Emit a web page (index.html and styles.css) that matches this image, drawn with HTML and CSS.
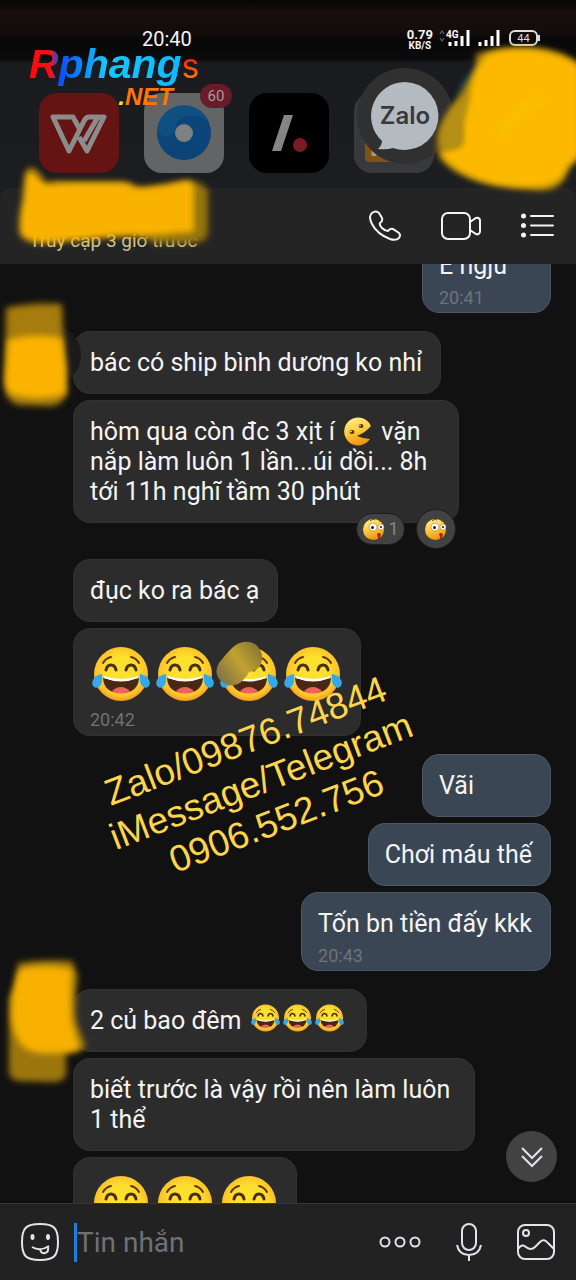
FILE: index.html
```html
<!DOCTYPE html>
<html lang="vi">
<head>
  <meta charset="UTF-8" />
  <meta name="viewport" content="width=device-width, initial-scale=1.0"/>
  <title>Chat</title>
  <link rel="stylesheet" href="styles.css">
</head>
<body>
  <!-- shared emoji -->
  <svg class="defs" aria-hidden="true">
    <defs>
      <radialGradient id="face" cx="50%" cy="45%" r="55%">
        <stop offset="0.5" stop-color="#fddf2e"/>
        <stop offset="0.85" stop-color="#fcc22b"/>
        <stop offset="1" stop-color="#f39a1d"/>
      </radialGradient>
      <linearGradient id="ball" x1="0.3" y1="0" x2="0.6" y2="1">
        <stop offset="0" stop-color="#fff08a"/>
        <stop offset="0.5" stop-color="#fdc93b"/>
        <stop offset="1" stop-color="#f08a0c"/>
      </linearGradient>
      <filter id="soft" x="-20%" y="-20%" width="140%" height="140%"><feGaussianBlur stdDeviation="3"/></filter>
      <symbol id="joy" viewBox="0 0 64 64">
        <circle cx="31" cy="30" r="27" fill="url(#face)"/>
        <path d="M13 19q3-5 8-6M41 13q5 1 8 6" fill="none" stroke="#5d3a12" stroke-width="2" stroke-linecap="round"/>
        <path d="M16 26q1-5 5-5t5 5M36 26q1-5 5-5t5 5" fill="none" stroke="#4b2d10" stroke-width="3" stroke-linecap="round"/>
        <path d="M13 34q18 5 36 0-1 15-18 15T13 34z" fill="#4a2714"/>
        <path d="M14 32q17 6 34 0v2q-17 7-34 0z" fill="#fff"/>
        <path d="M22 47q9-8 18 0-9 5-18 0z" fill="#f0625d"/>
        <path d="M12 30q1 8-2 12-3 3-6 1-3-3-1-7 2-5 9-6zM50 30q-1 8 2 12 3 3 6 1 3-3 1-7-2-5-9-6z" fill="#35a9e8"/>
      </symbol>
      <symbol id="pac" viewBox="0 0 30 30">
        <path d="M28 9A14 14 0 1 0 27 22q-6 0-13-3 8-3 14-10z" fill="url(#ball)"/>
        <ellipse cx="18" cy="9" rx="2.500" ry="2" fill="#5b3508"/>
        <ellipse cx="9" cy="15" rx="2.500" ry="2" fill="#5b3508"/>
        <circle cx="17" cy="8.500" r="0.800" fill="#fff"/>
        <circle cx="8" cy="14.500" r="0.800" fill="#fff"/>
      </symbol>
      <symbol id="wow" viewBox="0 0 24 24">
        <circle cx="11.500" cy="12.500" r="10.500" fill="url(#ball)"/>
        <path d="M8 4q3-3 5-1M17 4q2-1 4 1" fill="none" stroke="#7a4a0a" stroke-width="1"/>
        <circle cx="11" cy="10" r="4" fill="#fff" stroke="#b97a1a" stroke-width="0.600"/>
        <circle cx="19" cy="10" r="3" fill="#fff" stroke="#b97a1a" stroke-width="0.600"/>
        <circle cx="10.500" cy="10.500" r="1.500" fill="#321c06"/>
        <circle cx="19" cy="10" r="1.100" fill="#321c06"/>
        <path d="M15 17q2-2 4 0-1 2-1 5h-2q0-3-1-5z" fill="#a3280f"/>
      </symbol>
    </defs>
  </svg>

  <div class="shade">
    <div class="status-bar">
      <span class="clock">20:40</span>
      <div class="status-right">
        <span class="speed"><b>0.79</b><b class="unit">KB/S</b></span>
        <svg width="110" height="22" viewBox="0 0 110 22" aria-hidden="true">
          <path d="M2 8l2-3 2 3M2 12l2 3 2-3" fill="none" stroke="#666" stroke-width="1.200"/>
          <text x="8" y="12" class="net">4G</text>
          <path d="M12 20v-4M18 20v-5M24 20v-10M30 20V4M42 20v-4M48 20v-6M54 20V10M60 20V4" stroke="#fff" stroke-width="3"/>
          <rect x="72" y="5" width="27" height="14" rx="5" fill="none" stroke="#ddd" stroke-width="2"/>
          <path d="M101 9v6" stroke="#ddd" stroke-width="2"/>
          <text x="85.500" y="16" text-anchor="middle" class="batt">44</text>
        </svg>
      </div>
    </div>

    <div class="apps">
      <a class="app wps" href="#" aria-label="WPS">
        <svg width="80" height="80" viewBox="0 0 80 80">
          <path d="M45 48L59 24H50q-3 0-5 4L30 58 14 24h20l6 11M40 44l8 14 17-34h-8" fill="none" stroke="#8c8c8c" stroke-width="5" stroke-linejoin="round"/>
        </svg>
      </a>
      <a class="app web" href="#" aria-label="Browser">
        <svg width="80" height="80" viewBox="0 0 80 80">
          <circle cx="40" cy="40" r="27" fill="#0b4478"/>
          <path d="M13 39a27 27 0 0 1 52-10q-12-9-25-5-9 4-10 16-6 8-17-1z" fill="#0f4f82"/>
          <circle cx="40" cy="40" r="9" fill="#7e8082"/>
        </svg>
        <span class="count">60</span>
      </a>
      <a class="app slash" href="#" aria-label="Notes">
        <svg width="80" height="80" viewBox="0 0 80 80">
          <path d="M35 22h9L32 58h-9z" fill="#858585"/>
          <circle cx="51" cy="52" r="7" fill="#7b1a25"/>
        </svg>
      </a>
      <a class="app folder" href="#" aria-label="Folder">
        <svg width="80" height="80" viewBox="0 0 80 80">
          <rect x="11" y="40" width="30" height="29" rx="4" fill="#80530f"/>
          <path d="M20 55v8" stroke="#999" stroke-width="5"/>
        </svg>
      </a>
    </div>

    <div class="head-zalo">
      <svg width="96" height="96" viewBox="0 0 96 96" aria-hidden="true">
        <circle cx="48" cy="48" r="48" fill="#303031"/>
        <path d="M48 14a34 34 0 1 1-12 66q-6 2-15 1 4-4 4-8A34 34 0 0 1 48 14z" fill="#b3bac0"/>
      </svg>
      <span>Zalo</span>
    </div>

    <svg class="scribble scribble-head" width="150" height="160" viewBox="0 0 150 160" aria-hidden="true">
      <path d="M34 46q10-16 26-16L50 60 32 66z" fill="#17324d" filter="url(#soft)"/>
      <path d="M50 16q20-7 60-6 24 2 44 16v94q-12 8-16 22-8 12-28 10l-40-5Q34 142 14 120 6 100 22 76l28-46z" fill="#a8820c" filter="url(#soft)"/>
      <path d="M60 17q20-9 50-5 30 4 44 18v88q-12 6-16 18-10 14-32 13-36 2-64-12Q18 126 15 114q20-6 22-12-4-20 6-44 2-24 17-41z" fill="#fcb900" filter="url(#soft)"/>
      <path d="M16 108q-6-12 6-32 8-14 22-18-10 24-8 50-12 6-20 0z" fill="#b58f14" filter="url(#soft)"/>
      <path d="M72 98q20-26 44-38" fill="none" stroke="#fabf05" stroke-width="9" filter="url(#soft)"/>
    </svg>

    <div class="brand">
      <span class="brand-name">Rphang</span><span class="brand-s">s</span>
      <span class="brand-net"><i>.</i>NET</span>
    </div>
  </div>

  <header class="chat-head">
    <span class="seen">Truy cập 3 giờ trước</span>
    <svg class="scribble scribble-name" width="220" height="100" viewBox="0 0 220 100" aria-hidden="true">
      <path d="M26 8q6-6 14 4l6 8h78q10 2 16 6l44-6q18-2 24 8v44q-2 8-14 9l-40 0" fill="#93730e" filter="url(#soft)"/>
      <path d="M26 10q6-4 14 6l6 5h74q10 0 14 5 24 0 46-6 12-4 14 4v46q-40 4-80 5l-66 6q-22 1-28-9-2-14 3-36 1-18 3-26z" fill="#f9b204" filter="url(#soft)"/>
    </svg>
    <div class="actions">
      <button aria-label="Call">
        <svg width="34" height="34" viewBox="0 0 34 34"><path d="M4 4q4-3 7 0l3 5q1 3-2 5-1 2 2 5t6 3q2-3 5-2l6 4q2 2 0 5-3 3-9 1Q9 25 4 15 0 7 4 4z"/></svg>
      </button>
      <button aria-label="Video call">
        <svg width="40" height="30" viewBox="0 0 40 30"><rect x="1" y="2" width="28" height="26" rx="6"/><path d="M29 11l6-4q3-1 4 2v12q-1 3-4 2l-6-4"/></svg>
      </button>
      <button aria-label="Menu">
        <svg width="34" height="26" viewBox="0 0 34 26"><path d="M11 3h22M11 12.500h22M11 22h22" stroke-linecap="round"/><g fill="#f4f4f4" stroke="none"><circle cx="3.500" cy="3" r="2.500"/><circle cx="3.500" cy="12.500" r="2.500"/><circle cx="3.500" cy="22" r="2.500"/></g></svg>
      </button>
    </div>
  </header>

  <main class="messages">
    <section class="group sent first">
      <div class="bubble">E ngju<time>20:41</time></div>
    </section>

    <section class="group">
      <svg class="scribble scribble-ava" width="90" height="124" viewBox="0 0 90 124" aria-hidden="true">
        <circle cx="51" cy="61" r="30" fill="#1a1a1b"/>
        <path d="M6 14q25-6 56-4l2 48 3 40q-4 14-18 14l-30-1Q5 108 5 90z" fill="#a57c0c" filter="url(#soft)"/>
        <path d="M8 46q25-8 54-2l4 30-1 26q-28 8-54 0-6-4-6-16z" fill="#fbb300" filter="url(#soft)"/>
      </svg>
      <div class="bubble">bác có ship bình dương ko nhỉ</div>
      <div class="bubble reacted">hôm qua còn đc 3 xịt í <svg class="emo-pac" role="img" aria-label="pacman"><use href="#pac"/></svg> vặn nắp làm luôn 1 lần...úi dồi... 8h tới 11h nghĩ tầm 30 phút
        <div class="reactions">
          <button class="react-count"><svg width="24" height="24"><use href="#wow"/></svg>1</button>
          <button class="react-add" aria-label="React"><svg width="24" height="24"><use href="#wow"/></svg></button>
        </div>
      </div>
      <div class="bubble">đục ko ra bác ạ</div>
      <div class="bubble big">
        <div class="emojis"><svg><use href="#joy"/></svg><svg><use href="#joy"/></svg><svg><use href="#joy"/></svg><svg><use href="#joy"/></svg></div>
        <time>20:42</time>
        <svg class="smudge" width="50" height="50" viewBox="0 0 50 50" aria-hidden="true">
          <defs><linearGradient id="mud" x1="0" y1="1" x2="1" y2="0.3"><stop offset="0" stop-color="#6f6a4c"/><stop offset="0.6" stop-color="#c2a22f"/><stop offset="1" stop-color="#8e7a33"/></linearGradient></defs>
          <path d="M17 8Q28-2 40 4q10 8 6 20-3 7-12 8-4 8-11 12-9 4-17-3-8-8-2-18 6-8 13-15z" fill="url(#mud)"/>
        </svg>
      </div>
    </section>

    <section class="group sent">
      <div class="bubble">Vãi</div>
      <div class="bubble">Chơi máu thế</div>
      <div class="bubble">Tốn bn tiền đấy kkk<time>20:43</time></div>
    </section>

    <section class="group">
      <svg class="scribble scribble-ava low" width="96" height="140" viewBox="0 0 96 140" aria-hidden="true">
        <path d="M18 14q26-4 54-2l6 16q-4 20-2 44l10 26q-10 6-20 6v22q-4 8-14 7l-34-1q-10-2-9-12V54q0-10 6-14z" fill="#9c760c" filter="url(#soft)"/>
        <path d="M20 20q24-6 52 0-2 34 0 54l8 26q-28 8-50 2-14-6-18-30-2-32 8-52z" fill="#f8b102" filter="url(#soft)"/>
      </svg>
      <div class="bubble">2 củ bao đêm <span class="joys"><svg><use href="#joy"/></svg><svg><use href="#joy"/></svg><svg><use href="#joy"/></svg></span></div>
      <div class="bubble">biết trước là vậy rồi nên làm luôn 1 thể</div>
      <div class="bubble big">
        <div class="emojis"><svg><use href="#joy"/></svg><svg><use href="#joy"/></svg><svg><use href="#joy"/></svg></div>
      </div>
    </section>

    <button class="to-bottom" aria-label="Scroll to bottom">
      <svg width="24" height="24" viewBox="0 0 24 24"><path d="M2 3l10 10L22 3M2 11l10 10 10-10"/></svg>
    </button>
  </main>

  <form class="composer">
    <button type="button" aria-label="Stickers">
      <svg width="40" height="40" viewBox="0 0 40 40">
        <path d="M20 2c14 0 18 4 18 18s-4 18-18 18S2 34 2 20 6 2 20 2z"/>
        <path d="M12 25q8 5 17-1M20 27q1 5 5 4 4-1 3-6"/>
        <g fill="#e3e3ea" stroke="none"><ellipse cx="12.500" cy="15" rx="2" ry="3"/><ellipse cx="28" cy="15" rx="2" ry="3"/></g>
      </svg>
    </button>
    <label class="field"><input type="text" placeholder="Tin nhắn" aria-label="Tin nhắn"></label>
    <div class="tools">
      <button type="button" aria-label="More">
        <svg width="44" height="14" viewBox="0 0 44 14"><circle cx="7" cy="7" r="4.500"/><circle cx="22" cy="7" r="4.500"/><circle cx="37" cy="7" r="4.500"/></svg>
      </button>
      <button type="button" aria-label="Voice">
        <svg width="26" height="40" viewBox="0 0 26 40"><rect x="6" y="2" width="14" height="26" rx="7"/><path d="M1 23q2 10 12 10t12-10M13 33v6"/></svg>
      </button>
      <button type="button" aria-label="Photo">
        <svg width="40" height="38" viewBox="0 0 40 38"><rect x="2" y="2" width="36" height="34" rx="7"/><circle cx="10" cy="10" r="3"/><path d="M2 26q4-6 8-2 5 4 9 0l5-5q4-4 8 1l6 6"/></svg>
      </button>
    </div>
  </form>

  <div class="contact">Zalo/09876.74844<br>iMessage/Telegram<br>0906.552.756</div>
</body>
</html>
```
FILE: styles.css
```css
* { box-sizing: border-box; }
body {
  margin: 0; height: 100vh; display: flex; flex-direction: column;
  position: relative; overflow: hidden;
  background: #111; color: #f4f4f4; font-family: Roboto, sans-serif;
}
button { background: none; border: none; padding: 0; color: inherit; font: inherit; cursor: pointer; display: flex; }
svg { display: block; flex: none; }
.defs { position: absolute; width: 0; height: 0; }
.scribble { position: absolute; pointer-events: none; z-index: 3; }

/* top of the screen */
.shade {
  position: relative; padding: 26px 36px 15px 39px;
  background: linear-gradient(#080606 0, #160e0b 12px, #120c0a 34px, #090808 40px, #0b0b0c 58px, #191b1f 64px, #1b1d20 100%);
}
.status-bar { display: flex; justify-content: space-between; height: 26px; }
.clock { margin-left: 103px; font-size: 20px; line-height: 26px; }
.status-right { display: flex; }
.speed { display: flex; flex-direction: column; align-items: center; font-size: 13px; line-height: 13px; padding-top: 2px; }
.unit { font-size: 10px; line-height: 10px; }
.net { font-size: 10px; font-weight: bold; fill: #fff; }
.batt { font-size: 11px; fill: #ddd; }
.status-right svg { margin: 0 -8px 0 5px; }

.apps { display: flex; gap: 25px; margin-top: 41px; }
.app { position: relative; width: 80px; height: 80px; border-radius: 18px; }
.wps { background: #651313; }
.web { background: #626466; }
.slash { background: #000; }
.folder { background: #38393b; }
.count {
  position: absolute; top: -9px; right: -8px; width: 32px; height: 24px;
  border-radius: 12px; background: #681b28; color: #a99a9c;
  font-size: 15px; line-height: 24px; text-align: center;
}
.head-zalo { position: absolute; left: 357px; top: 68px; }
.head-zalo span {
  position: absolute; inset: 0; text-align: center; line-height: 95px;
  font-family: Inter, sans-serif; font-weight: 600; font-size: 24px; color: #36393d;
}
.scribble-head { left: 426px; top: 38px; }

.brand { position: absolute; left: 29px; top: 42px; width: 172px; z-index: 4; line-height: 44px; white-space: nowrap; }
.brand-name {
  font: italic bold 41px/44px "Liberation Sans", sans-serif;
  background: linear-gradient(90deg, #ff0b0b 0 12%, #e21b2d 15%, #1247f5 19%, #0a7dff 32%, #12c8ff 50%, #10b8ff);
  -webkit-background-clip: text; background-clip: text; color: transparent;
}
.brand-s {
  font: 34px/44px Inter, sans-serif;
  background: linear-gradient(#f31d10 30%, #ff7a00 80%);
  -webkit-background-clip: text; background-clip: text; color: transparent;
}
.brand-net {
  position: absolute; right: 28px; top: 42px;
  font: italic bold 24px/26px "Liberation Sans", sans-serif; color: #ff7508;
}
.brand-net i { color: #f4ec16; }

/* chat header */
.chat-head {
  position: relative; height: 76px; flex: none; padding: 0 22px 0 29px;
  display: flex; justify-content: space-between; align-items: center;
  background: #242424; border-radius: 10px 10px 0 0; box-shadow: 0 -10px 0 #1b1d20;
}
.seen { align-self: flex-end; font-size: 19px; line-height: 22px; padding-bottom: 12px; color: #cfc390; }
.scribble-name { left: 0; top: -26px; }
.actions { display: flex; align-items: center; gap: 39px; }
.actions svg { fill: none; stroke: #f4f4f4; stroke-width: 2; }

/* messages */
.messages { position: relative; flex: 1; min-height: 0; overflow: hidden; }
.group { position: relative; display: flex; flex-direction: column; align-items: flex-start; gap: 6px; margin: 0 25px 18px 73px; }
.group.sent { align-items: flex-end; }
.group.first { margin-top: -30px; }
.bubble {
  position: relative; max-width: 402px; padding: 16px 18px 15px 16px;
  background: #2c2c2c; border: 1px solid #323232; border-radius: 17px;
  font-size: 25px; line-height: 30px;
}
.sent .bubble { min-width: 129px; background: #3b4654; border-color: #4b5764; }
.bubble time { display: block; font-size: 18px; line-height: 20px; color: #6d7379; margin: 7px 0 -11px; }
.reacted { width: 386px; padding-right: 24px; margin-bottom: 30px; }
.emo-pac { display: inline-block; width: 30px; height: 30px; margin: -4px 2px; vertical-align: -3px; }
.reactions { position: absolute; right: 2px; bottom: -27px; display: flex; align-items: center; gap: 11px; line-height: 20px; }
.reactions button { background: #424242; border: 1px solid #1d1d1d; align-items: center; justify-content: center; }
.reactions .react-count { width: 49px; height: 32px; border-radius: 16px; font-size: 18px; gap: 2px; color: #858585; }
.react-add { width: 40px; height: 40px; border-radius: 50%; }
.emojis { display: flex; }
.emojis svg { width: 64px; height: 64px; margin-bottom: -3px; }
.big { padding: 15px 14px 12px 16px; }
.big time { margin: 5px 0 -7px; }
.smudge { position: absolute; left: 141px; top: 11px; }
.joys { display: inline-flex; vertical-align: -6px; margin: -4px 2px; }
.joys svg { width: 32px; height: 32px; }
.scribble-ava { left: -73px; top: -37px; }
.low { top: -40px; }
.to-bottom {
  position: absolute; right: 19px; bottom: 21px; width: 51px; height: 51px;
  border-radius: 50%; background: #424242; align-items: center; justify-content: center;
}
.to-bottom svg { fill: none; stroke: #e3e3ea; stroke-width: 2; }

/* input bar */
.composer {
  height: 77px; flex: none; display: flex; align-items: center; gap: 14px;
  padding: 0 20px; background: #222; border-top: 1px solid #363636;
}
.composer svg { fill: none; stroke: #e3e3ea; stroke-width: 2; }
.field { flex: 1; min-width: 0; display: flex; border-left: 3px solid #1f7fe0; height: 39px; }
.field input {
  width: 100%; padding: 0; background: none; border: none; outline: none;
  color: #f4f4f4; font: 28px/39px Roboto, sans-serif;
}
.field input::placeholder { color: #6f7178; opacity: 1; }
.tools { display: flex; align-items: center; gap: 34px; }

.contact {
  position: absolute; left: 261px; top: 781px; z-index: 5;
  transform: translate(-50%, -50%) rotate(-21deg);
  font: 37px/43px "Liberation Sans", sans-serif; color: #fdd54a;
  text-align: center; white-space: nowrap; pointer-events: none;
}
```
